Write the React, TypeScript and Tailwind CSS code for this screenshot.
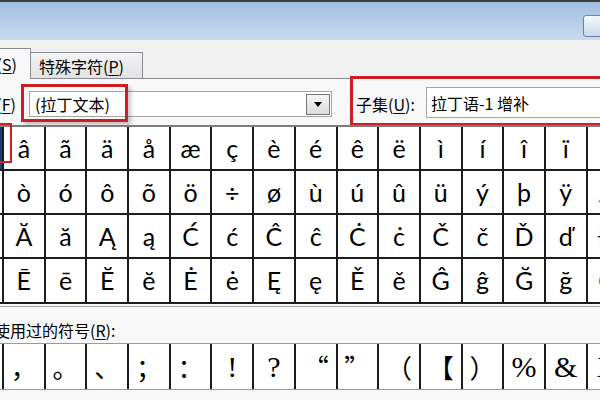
const GRID = [
  ["á", "â", "ã", "ä", "å", "æ", "ç", "è", "é", "ê", "ë", "ì", "í", "î", "ï", "ð"],
  ["ñ", "ò", "ó", "ô", "õ", "ö", "÷", "ø", "ù", "ú", "û", "ü", "ý", "þ", "ÿ", "Ā"],
  ["ā", "Ă", "ă", "Ą", "ą", "Ć", "ć", "Ĉ", "ĉ", "Ċ", "ċ", "Č", "č", "Ď", "ď", "Đ"],
  ["đ", "Ē", "ē", "Ĕ", "ĕ", "Ė", "ė", "Ę", "ę", "Ě", "ě", "Ĝ", "ĝ", "Ğ", "ğ", "Ġ"],
];

// serif = Latin punctuation drawn in a Times-like face, the rest are fullwidth CJK marks
const RECENT: { ch: string; serif?: boolean }[] = [
  { ch: "" },
  { ch: "，" },
  { ch: "。" },
  { ch: "、" },
  { ch: "；" },
  { ch: "：" },
  { ch: "!", serif: true },
  { ch: "?", serif: true },
  { ch: "“" },
  { ch: "”" },
  { ch: "（" },
  { ch: "【" },
  { ch: "）" },
  { ch: "%", serif: true },
  { ch: "&", serif: true },
  { ch: "X", serif: true },
];

function Key({ k }: { k: string }) {
  return (
    <>
      (<span className="underline underline-offset-2">{k}</span>)
    </>
  );
}

function DropArrow() {
  return (
    <svg width="8" height="5" viewBox="0 0 8 5">
      <polygon points="0,0 8,0 4,5" fill="#000" />
    </svg>
  );
}

export default function App() {
  return (
    <div className="relative w-[600px] h-[400px] overflow-hidden bg-[#f0f0f0] text-[16px] text-black font-['Noto_Sans_CJK_SC',sans-serif]">
      <div className="h-[2px] bg-[#3c3c3c]" />

      {/* title bar */}
      <div className="h-[38px] flex justify-end items-start pt-[13px] bg-gradient-to-b from-[#a3bfe1] to-[#c8daef]">
        <div className="w-[30px] h-[22px] -mr-[13px] rounded-[3px] border border-[#70829c] bg-gradient-to-b from-[#f5f8fc] via-[#dfe8f3] to-[#c8d7ea]" />
      </div>

      {/* tabs */}
      <div className="h-[39px] flex items-end">
        <div className="w-[91px] h-[31px] -ml-[60px] shrink-0 flex items-center justify-end pr-[13px] border-t border-r border-[#898c95] bg-[#f8f8f8] leading-none">
          符号<Key k="S" />
        </div>
        <div className="w-[112px] h-[27px] shrink-0 flex items-center pl-[8px] border-t border-r border-b border-[#898c95] bg-gradient-to-b from-[#f3f3f3] to-[#e2e2e2] leading-none">
          特殊字符<Key k="P" />
        </div>
        <div className="flex-1 h-px bg-[#898c95]" />
      </div>

      {/* tab panel */}
      <div className="bg-[#f8f8f8] h-[321px]">
        {/* font / subset row */}
        <div className="relative h-[45.5px] flex items-start">
          <div className="w-[60px] -ml-[44px] shrink-0 h-[26px] mt-[12px] flex items-center justify-end leading-none">
            字体<Key k="F" />
          </div>
          <div className="ml-[13px] mt-[12px] w-[303px] h-[26px] shrink-0 flex items-center border border-[#a5a5a5] bg-white">
            <span className="flex-1 pl-[5px] leading-none">(拉丁文本)</span>
            <div className="w-[24px] h-[21px] mr-px flex items-center justify-center border border-[#767676] bg-gradient-to-b from-[#f4f4f4] to-[#dcdcdc]">
              <DropArrow />
            </div>
          </div>
          <div className="ml-[24px] w-[66px] shrink-0 h-[26px] mt-[12px] flex items-center leading-none">
            子集<Key k="U" />:
          </div>
          <div className="ml-[4px] mt-[8px] w-[200px] h-[31px] shrink-0 flex items-center pl-[4px] border border-[#a5a5a5] bg-white leading-none">
            拉丁语-1 增补
          </div>

          <div className="absolute left-[21px] top-[5px] w-[107px] h-[38px] border-[3px] border-[#cc1f24] shadow-[3px_3px_4px_rgba(0,0,0,0.22)]" />
          <div className="absolute left-[350px] -top-[3px] w-[270px] h-[50px] border-[3px] border-[#cc1f24]" />
        </div>

        {/* symbol grid */}
        <div className="relative -ml-[39.7px] w-max">
          <div className="grid grid-cols-[repeat(16,39.7px)] grid-rows-[repeat(4,42.3px)] gap-[2px] px-[2px] pb-[2px] border-t-2 border-[#7c7c7c] bg-[#1c1c1c]">
            {GRID.flatMap((row, r) =>
              row.map((ch, c) => {
                const selected = r === 0 && c === 0;
                return (
                  <div
                    key={`${r}-${c}`}
                    className={`text-center leading-[42.3px] text-[25px] font-['Lato',sans-serif] ${
                      selected ? "bg-[#1f3c78] text-white" : "bg-white"
                    }`}
                  >
                    {ch}
                  </div>
                );
              })
            )}
          </div>
          <div className="absolute left-[9.7px] top-[-1.5px] w-[42px] h-[40px] border-[2.5px] border-[#cc1f24]" />
        </div>

        <div className="mt-[2.3px] h-px bg-[#a0a0a0]" />

        <div className="mt-[12px] h-[22px] -ml-[38px] flex items-center leading-none">
          近期使用过的符号<Key k="R" />:
        </div>

        {/* recently used */}
        <div className="mt-[1.7px] -ml-[39.7px] w-max h-[47.6px] flex border-y border-[#9a9a9a] bg-white">
          {RECENT.map((s, i) => (
            <div
              key={i}
              className={`w-[41.7px] shrink-0 border-l-2 border-[#1c1c1c] text-center leading-[45.6px] ${
                s.serif
                  ? "text-[30px] font-['Liberation_Serif',serif]"
                  : "text-[26px] font-['Noto_Sans_CJK_SC',sans-serif]"
              }`}
            >
              {s.ch}
            </div>
          ))}
        </div>
      </div>
    </div>
  );
}
